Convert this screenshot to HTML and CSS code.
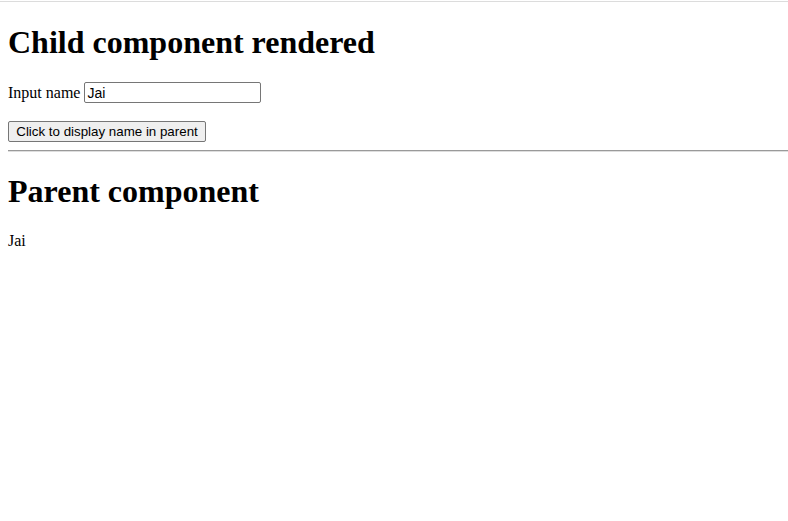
FILE: index.html
```html
<!DOCTYPE html>
<html>
<head>
<meta charset="utf-8">
<link rel="stylesheet" href="styles.css">
</head>
<body class="page">
<div class="topline"></div>
<div class="child">
  <h1 class="title">Child component rendered</h1>
  <p class="row">Input name <input class="field" type="text" value="Jai"></p>
  <button class="btn">Click to display name in parent</button>
</div>
<hr class="divider">
<div class="parent">
  <h1 class="title">Parent component</h1>
  <p class="row">Jai</p>
</div>
</body>
</html>
```

FILE: styles.css
```css
html {
  background: #fff;
}
.page {
  margin: 0;
  padding: 0 0 0 8px;
  font-family: "Liberation Serif", "Times New Roman", serif;
  font-size: 16px;
  color: #000;
  overflow: hidden;
}
.topline {
  height: 1px;
  margin: 1px 0 0 -8px;
  background: #dcdcdc;
}
.title {
  font-size: 32px;
  font-weight: bold;
  margin: 21px 0 22px 0;
  line-height: normal;
}
.child .title {
  margin-top: 22px;
  margin-bottom: 21px;
}
.row {
  margin: 16px 0;
}
.child .row {
  margin-bottom: 18px;
}
.field {
  font-family: "Liberation Sans", Arial, sans-serif;
  font-size: 14px;
  width: 177px;
  height: 21px;
  box-sizing: border-box;
  border: 1px solid #767676;
  border-radius: 2px;
  padding: 1px 2px;
  margin: 0;
  vertical-align: baseline;
  color: #000;
}
.btn {
  font-family: "Liberation Sans", Arial, sans-serif;
  font-size: 13.33px;
  height: 21px;
  width: 198px;
  box-sizing: border-box;
  background: #efefef;
  border: 1px solid #767676;
  border-radius: 2px;
  padding: 1px 6px;
  margin: 0;
  color: #000;
}
.divider {
  margin: 8px 0 0 0;
  border: none;
  border-top: 1px solid #9a9a9a;
  border-bottom: 1px solid #dedede;
  height: 0;
}
```
